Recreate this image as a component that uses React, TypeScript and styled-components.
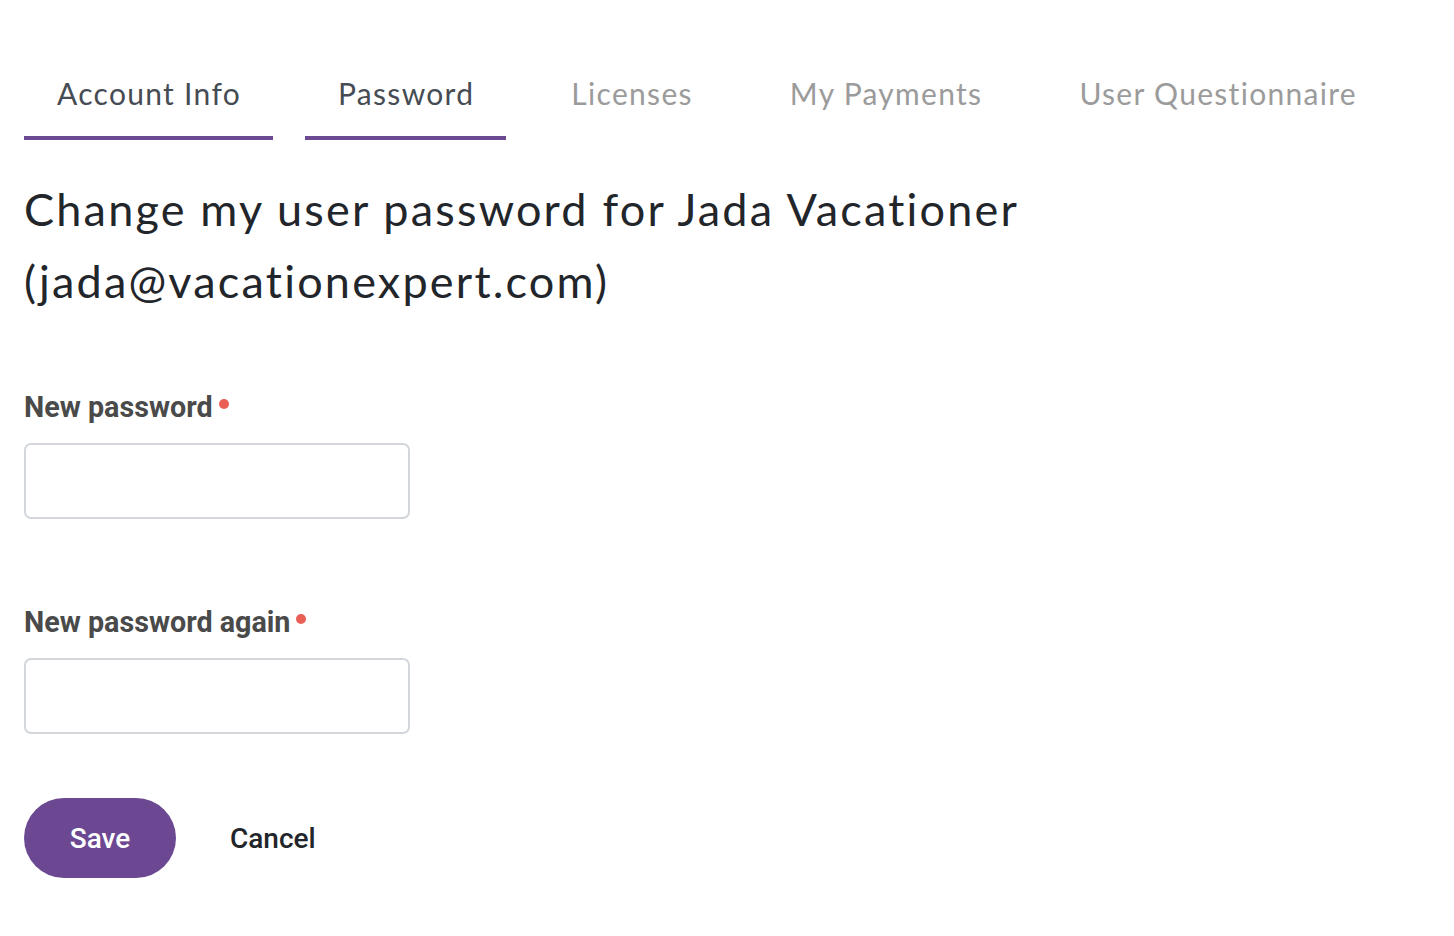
import React from "react";
import styled, { createGlobalStyle } from "styled-components";

const Global = createGlobalStyle`
  html, body { margin: 0; padding: 0; background: #ffffff; }
  * { box-sizing: border-box; }
`;

const Page = styled.div`
  padding: 71px 24px 0 24px;
  font-family: "Lato", "Noto Sans", sans-serif;
  font-variant-ligatures: none;
  font-feature-settings: "liga" 0;
`;

const TabBar = styled.nav`
  display: flex;
  gap: 32px;
`;

const Tab = styled.div<{ $active?: boolean }>`
  padding: 0 32px 21px 33px;
  font-size: 30px;
  line-height: 44px;
  letter-spacing: 1.3px;
  color: ${(p) => (p.$active ? "#464c53" : "#9b9b9b")};
  border-bottom: 4px solid ${(p) => (p.$active ? "#6b4a93" : "transparent")};
  white-space: nowrap;
`;

const Heading = styled.h1`
  margin: 33px 0 0 0;
  font-weight: 400;
  font-size: 45px;
  line-height: 72px;
  letter-spacing: 2.2px;
  color: #22252a;
  max-width: 1100px;
`;

const Form = styled.form`
  margin-top: 72px;
  display: flex;
  flex-direction: column;
  font-family: "Roboto", sans-serif;
`;

const Field = styled.div`
  display: flex;
  flex-direction: column;
  & + & { margin-top: 85px; }
`;

const Label = styled.label`
  font-weight: 700;
  font-size: 28.7px;
  line-height: 36px;
  color: #4a4a4a;
  display: flex;
  align-items: flex-start;
`;

const Required = styled.span`
  width: 10px;
  height: 10px;
  border-radius: 50%;
  background: #ea5f55;
  margin: 10px 0 0 6px;
`;

const Input = styled.input`
  margin-top: 18px;
  width: 386px;
  height: 76px;
  border: 2px solid #d3d7dc;
  border-radius: 7px;
  background: #fff;
  font-size: 24px;
  padding: 0 16px;
`;

const Actions = styled.div`
  margin-top: 64px;
  display: flex;
  align-items: center;
  gap: 54px;
`;

const SaveButton = styled.button`
  width: 152px;
  height: 80px;
  border: none;
  border-radius: 40px;
  background: #6b4891;
  color: #ffffff;
  font-family: "Roboto", sans-serif;
  font-weight: 500;
  font-size: 28px;
  cursor: pointer;
`;

const CancelButton = styled.button`
  border: none;
  background: none;
  padding: 0;
  color: #22252a;
  font-family: "Roboto", sans-serif;
  font-weight: 500;
  font-size: 28px;
  cursor: pointer;
`;

const tabs = ["Account Info", "Password", "Licenses", "My Payments", "User Questionnaire"];
const activeTabs = new Set(["Account Info", "Password"]);

export default function App() {
  return (
    <>
      <Global />
      <Page>
        <TabBar>
          {tabs.map((t) => (
            <Tab key={t} $active={activeTabs.has(t)}>
              {t}
            </Tab>
          ))}
        </TabBar>
        <Heading>
          Change my user password for Jada Vacationer (jada@vacationexpert.com)
        </Heading>
        <Form onSubmit={(e) => e.preventDefault()}>
          <Field>
            <Label>
              New password
              <Required />
            </Label>
            <Input type="password" />
          </Field>
          <Field>
            <Label>
              New password again
              <Required />
            </Label>
            <Input type="password" />
          </Field>
          <Actions>
            <SaveButton type="submit">Save</SaveButton>
            <CancelButton type="button">Cancel</CancelButton>
          </Actions>
        </Form>
      </Page>
    </>
  );
}
